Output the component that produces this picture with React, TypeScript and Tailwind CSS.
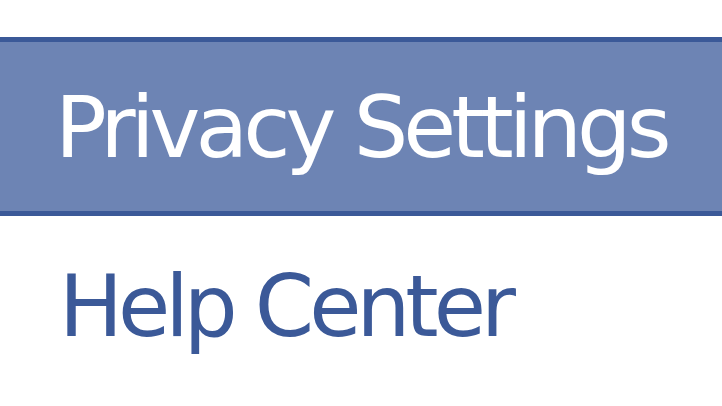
export default function App() {
  return (
    <div className="w-[722px] h-[406px] overflow-hidden bg-white pt-[37px] font-['DejaVu_Sans',sans-serif]">
      <div className="border-y-[5px] border-[#3b5998] bg-[#6d84b4] pl-[55px] pt-[42px] pb-[41px]">
        <div className="text-[86px] leading-none tracking-[-5px] text-white whitespace-nowrap">Privacy Settings</div>
      </div>
      <div className="pl-[59px] pt-[48px]">
        <div className="text-[85px] leading-none tracking-[-5px] text-[#3b5998] whitespace-nowrap">Help Center</div>
      </div>
    </div>
  );
}
